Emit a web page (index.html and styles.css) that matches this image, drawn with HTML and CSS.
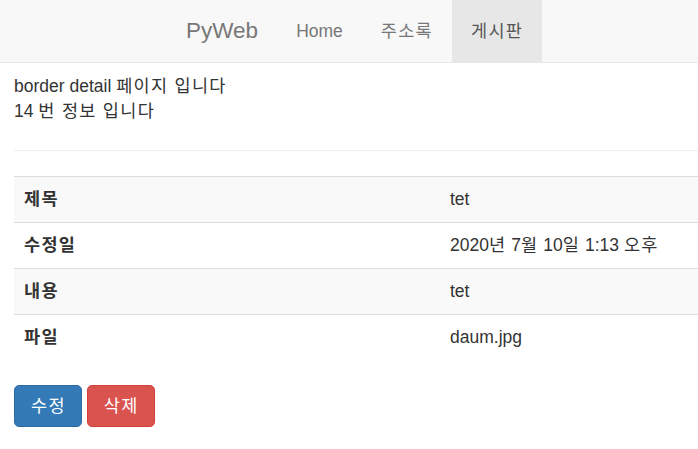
FILE: index.html
```html
<!DOCTYPE html>
<html lang="ko">
<head>
<meta charset="utf-8">
<title>PyWeb</title>
<link rel="stylesheet" href="styles.css">
</head>
<body>
<nav class="navbar">
  <div class="navbar-inner">
    <a class="brand" href="#">PyWeb</a>
    <ul class="nav">
      <li><a href="#">Home</a></li>
      <li><a href="#" class="ko">주소록</a></li>
      <li class="active"><a href="#" class="ko">게시판</a></li>
    </ul>
  </div>
</nav>
<main class="content">
  <p class="intro">border detail <span class="ko">페이지 입니다</span><br>14 <span class="ko">번 정보 입니다</span></p>
  <hr class="divider">
  <table class="detail">
    <tbody>
      <tr class="odd"><th class="ko">제목</th><td>tet</td></tr>
      <tr><th class="ko">수정일</th><td>2020<span class="ko">년</span> 7<span class="ko">월</span> 10<span class="ko">일</span> 1:13 <span class="ko">오후</span></td></tr>
      <tr class="odd"><th class="ko">내용</th><td>tet</td></tr>
      <tr><th class="ko">파일</th><td>daum.jpg</td></tr>
    </tbody>
  </table>
  <div class="actions">
    <a class="btn btn-primary ko" href="#">수정</a>
    <a class="btn btn-danger ko" href="#">삭제</a>
  </div>
</main>
</body>
</html>
```
FILE: styles.css
```css
* { box-sizing: border-box; }
html, body { margin: 0; padding: 0; }
body {
  font-family: "Liberation Sans", Arial, "Noto Sans CJK KR", sans-serif;
  font-size: 17.5px;
  line-height: 25px;
  color: #333;
  background: #fff;
  overflow: hidden;
}
a { text-decoration: none; }
.ko { letter-spacing: 1.3px; }

.navbar {
  background: #f8f8f8;
  border-bottom: 1px solid #e7e7e7;
  height: 63px;
}
.navbar-inner {
  display: flex;
  align-items: stretch;
  height: 62px;
  padding-left: 167px;
}
.brand {
  display: block;
  padding: 0 19px;
  font-size: 22.5px;
  line-height: 62px;
  color: #777;
}
.nav {
  display: flex;
  list-style: none;
  margin: 0;
  padding: 0;
}
.nav li a {
  display: block;
  padding: 0 19px;
  line-height: 62px;
  color: #777;
}
.nav li.active a {
  background: #e7e7e7;
  color: #555;
}

.content {
  padding: 11px 0 0 14px;
}
.intro {
  margin: 0;
}
.divider {
  border: 0;
  border-top: 1px solid #eee;
  margin: 26px 0 25px 0;
}
.detail {
  width: 100%;
  border-collapse: collapse;
  border-spacing: 0;
  margin-bottom: 25px;
}
.detail th, .detail td {
  padding: 10px;
  line-height: 25px;
  border-top: 1px solid #ddd;
  text-align: left;
  vertical-align: top;
}
.detail th { width: 426px; font-weight: bold; }
.detail tr.odd { background: #f9f9f9; }

.actions {
  display: flex;
  gap: 5px;
}
.btn {
  display: inline-block;
  padding: 7.5px 15px 7.5px 16px;
  line-height: 25px;
  border: 1px solid transparent;
  border-radius: 5px;
  color: #fff;
  font-size: 17.5px;
}
.btn-primary { background: #337ab7; border-color: #2e6da4; }
.btn-danger { background: #d9534f; border-color: #d43f3a; }
```
